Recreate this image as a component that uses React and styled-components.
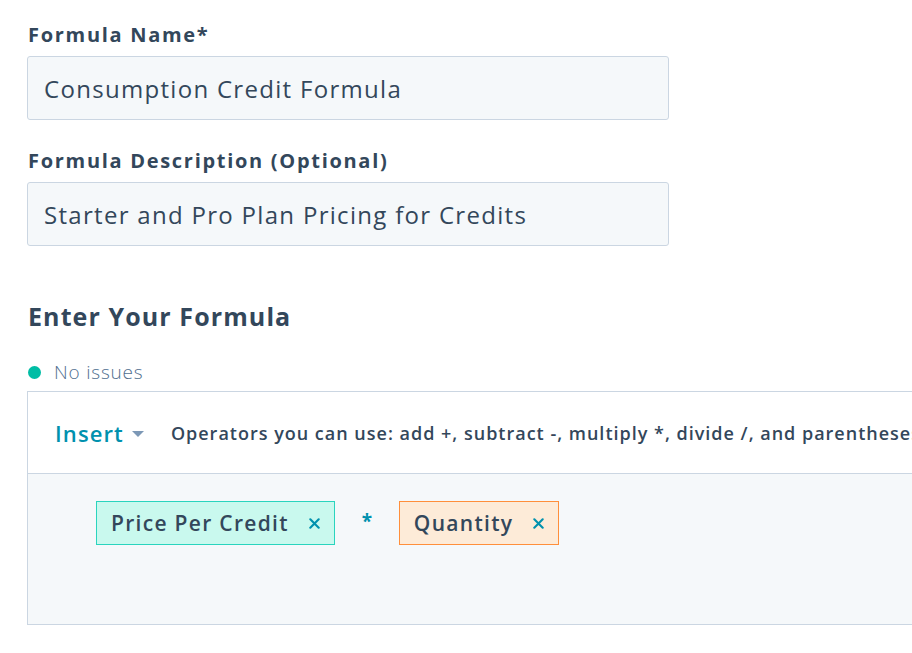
import React from 'react'
import styled, { createGlobalStyle } from 'styled-components'

const GlobalStyle = createGlobalStyle`
  body {
    margin: 0;
    background: #ffffff;
    font-family: "Open Sans", "Noto Sans", sans-serif;
    color: #33475b;
  }
`

const Page = styled.div`
  padding: 21px 0 0 27px;
  overflow: hidden;
  width: 885px;
`

const Field = styled.div`
  display: flex;
  flex-direction: column;
  width: 642px;
  margin-bottom: ${props => props.last ? '53px' : '27px'};
`

const Label = styled.label`
  font-size: 20px;
  font-weight: 700;
  line-height: 28px;
  letter-spacing: 1.7px;
  margin: 0 0 7px 1px;
  color: #33475b;
`

const TextInput = styled.input`
  height: 64px;
  box-sizing: border-box;
  background: #f5f8fa;
  border: 1px solid #cbd6e2;
  border-radius: 3px;
  padding: 0 16px;
  font-family: inherit;
  font-size: 24px;
  font-weight: 400;
  letter-spacing: 1.3px;
  color: #33475b;
  outline: none;
`

const Heading = styled.h2`
  font-size: 25px;
  font-weight: 700;
  line-height: 34px;
  letter-spacing: 1.1px;
  margin: 0 0 27px 1px;
  color: #33475b;
`

const Status = styled.div`
  display: flex;
  align-items: center;
  gap: 13px;
  margin: 0 0 7px 1px;
  font-size: 19px;
  font-weight: 300;
  letter-spacing: 0.8px;
  color: #516f90;
  line-height: 24px;
`

const Dot = styled.span`
  width: 13px;
  height: 13px;
  border-radius: 50%;
  background: #00bda5;
`

const Editor = styled.div`
  width: 900px;
  border: 1px solid #cbd6e2;
  border-right: none;
`

const Toolbar = styled.div`
  height: 81px;
  display: flex;
  align-items: center;
  padding-left: 27px;
  background: #ffffff;
  border-bottom: 1px solid #cbd6e2;
  white-space: nowrap;
  overflow: hidden;
`

const InsertButton = styled.button`
  display: flex;
  align-items: center;
  gap: 8px;
  border: none;
  background: none;
  padding: 0;
  font-family: inherit;
  font-size: 22px;
  font-weight: 600;
  letter-spacing: 1.1px;
  color: #0091ae;
  margin-right: 27px;
  cursor: pointer;
`

const Caret = styled.span`
  width: 0;
  height: 0;
  border-left: 6px solid transparent;
  border-right: 6px solid transparent;
  border-top: 6px solid #7c98b6;
  margin-top: 2px;
`

const Hint = styled.span`
  font-size: 18px;
  font-weight: 600;
  letter-spacing: 1px;
  color: #33475b;
`

const Canvas = styled.div`
  height: 150px;
  background: #f5f8fa;
  display: flex;
  align-items: flex-start;
  padding: 27px 0 0 68px;
  box-sizing: border-box;
`

const Token = styled.span`
  display: inline-flex;
  align-items: center;
  height: 44px;
  box-sizing: border-box;
  padding: 0 14px 0 14px;
  gap: 20px;
  font-size: 21px;
  font-weight: 600;
  letter-spacing: 1.3px;
  color: #33475b;
  background: ${props => props.kind === 'number' ? '#fdebd8' : '#c9f9ee'};
  border: 1px solid ${props => props.kind === 'number' ? '#ff8f3b' : '#2ad4be'};
`

const Remove = styled.svg`
  width: 11px;
  height: 11px;
  margin-top: 1px;
`

const Operator = styled.span`
  width: 64px;
  text-align: center;
  font-size: 19px;
  font-weight: 700;
  color: #0091ae;
  line-height: 40px;
`

const CloseIcon = () => (
  <Remove viewBox="0 0 11 11">
    <path d="M1.3 1.3 L9.7 9.7 M9.7 1.3 L1.3 9.7" stroke="#0091ae" strokeWidth="2.1" strokeLinecap="round" fill="none" />
  </Remove>
)

export default function App() {
  return (
    <>
      <GlobalStyle />
      <Page>
        <Field>
          <Label>Formula Name*</Label>
          <TextInput defaultValue="Consumption Credit Formula" />
        </Field>
        <Field last>
          <Label>Formula Description (Optional)</Label>
          <TextInput defaultValue="Starter and Pro Plan Pricing for Credits" />
        </Field>
        <Heading>Enter Your Formula</Heading>
        <Status>
          <Dot />
          No issues
        </Status>
        <Editor>
          <Toolbar>
            <InsertButton>
              Insert
              <Caret />
            </InsertButton>
            <Hint>Operators you can use: add +, subtract -, multiply *, divide /, and parentheses ()</Hint>
          </Toolbar>
          <Canvas>
            <Token kind="property">
              Price Per Credit
              <CloseIcon />
            </Token>
            <Operator>*</Operator>
            <Token kind="number">
              Quantity
              <CloseIcon />
            </Token>
          </Canvas>
        </Editor>
      </Page>
    </>
  )
}
